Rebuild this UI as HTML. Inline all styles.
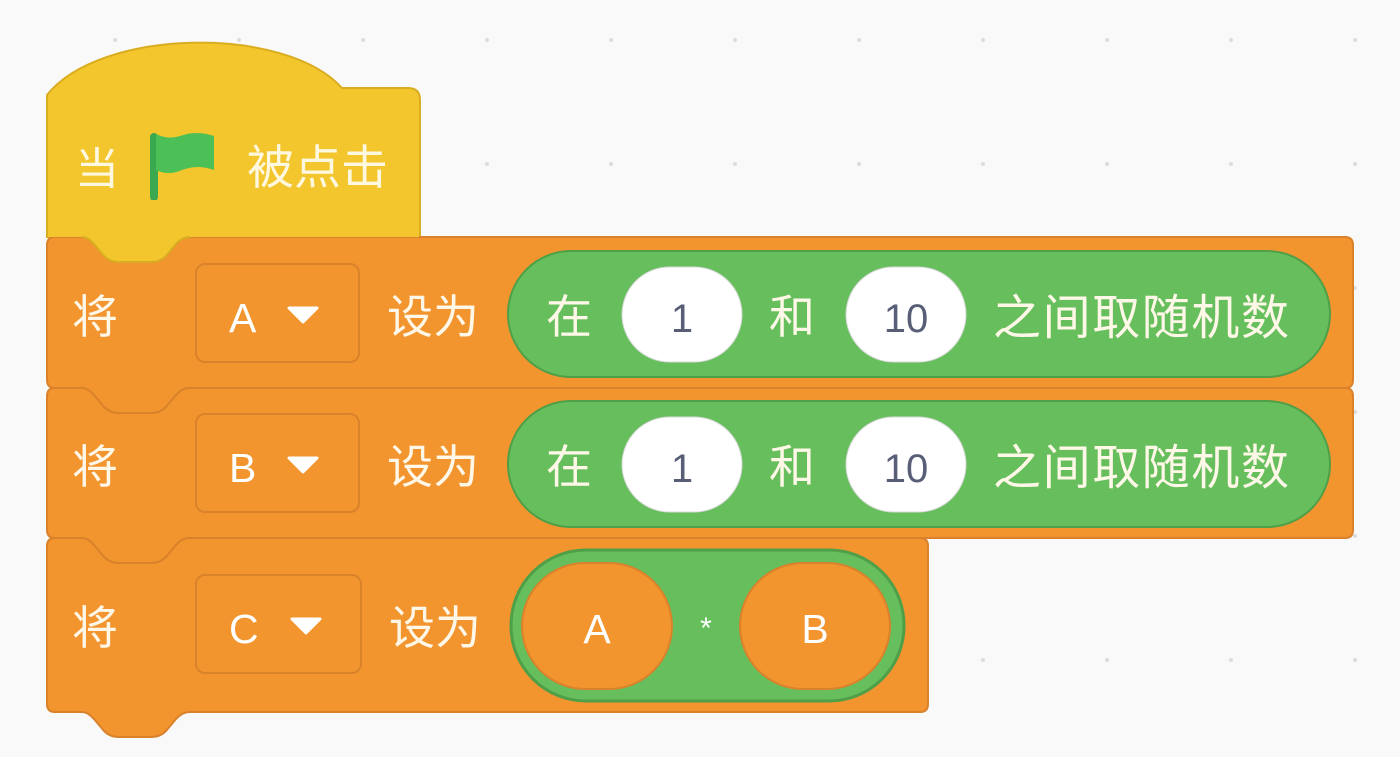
<!DOCTYPE html>
<html><head><meta charset="utf-8"><style>
html,body{margin:0;padding:0;background:#f9f9f9;}
svg{display:block}
text{font-family:"Liberation Sans","Noto Sans CJK SC",sans-serif;}
</style></head><body>
<svg width="1400" height="757" viewBox="0 0 1400 757" xmlns="http://www.w3.org/2000/svg">
<defs><pattern id="g" x="115" y="40" width="124" height="124" patternUnits="userSpaceOnUse"><circle cx="0" cy="0" r="2" fill="#dcdcdc"/><circle cx="124" cy="0" r="2" fill="#dcdcdc"/><circle cx="0" cy="124" r="2" fill="#dcdcdc"/><circle cx="124" cy="124" r="2" fill="#dcdcdc"/></pattern></defs>
<rect width="1400" height="757" fill="#f9f9f9"/>
<rect width="1400" height="757" fill="url(#g)"/>

<!-- hat -->
<path d="M47 95 C 100 28, 285 25, 342 88 L408 88 Q420 88 420 100 L420 237 L47 237 Z" fill="#f2c62c" stroke="#d9ad20" stroke-width="2"/>
<text x="75" y="184" font-size="44" fill="#fff8e0">当</text>
<path d="M154 137 L154 197" stroke="#3aa84e" stroke-width="8" stroke-linecap="round"/>
<path d="M156 134 Q168 140 180 136 Q196 130 214 136 L214 170 Q198 164 182 170 Q168 176 156 170 Z" fill="#4cbf56"/>
<text x="247" y="184" font-size="47" fill="#fff8e0">被点击</text>

<!-- blocks -->
<path d="M55 237 L82 237 Q88 237 94 244 L104 256 Q110 262 118 262 L152 262 Q160 262 166 256 L176 244 Q182 237 190 237 L1345 237 Q1353 237 1353 245 L1353 380 Q1353 388 1345 388 L190 388 Q182 388 176 395 L166 407 Q160 413 152 413 L118 413 Q110 413 104 407 L94 395 Q88 388 82 388 L55 388 Q47 388 47 380 L47 245 Q47 237 55 237 Z" fill="#f2952f" stroke="#d9822b" stroke-width="2"/>
<path d="M55 388 L82 388 Q88 388 94 395 L104 407 Q110 413 118 413 L152 413 Q160 413 166 407 L176 395 Q182 388 190 388 L1345 388 Q1353 388 1353 396 L1353 530 Q1353 538 1345 538 L190 538 Q182 538 176 545 L166 557 Q160 563 152 563 L118 563 Q110 563 104 557 L94 545 Q88 538 82 538 L55 538 Q47 538 47 530 L47 396 Q47 388 55 388 Z" fill="#f2952f" stroke="#d9822b" stroke-width="2"/>
<path d="M55 538 L82 538 Q88 538 94 545 L104 557 Q110 563 118 563 L152 563 Q160 563 166 557 L176 545 Q182 538 190 538 L920 538 Q928 538 928 546 L928 704 Q928 712 920 712 L190 712 Q182 712 176 719 L166 731 Q160 737 152 737 L118 737 Q110 737 104 731 L94 719 Q88 712 82 712 L55 712 Q47 712 47 704 L47 546 Q47 538 55 538 Z" fill="#f2952f" stroke="#d9822b" stroke-width="2"/>
<!-- hat bottom notch on top -->
<path d="M48 200 L48 237 L82 237 Q88 237 94 244 L104 256 Q110 262 118 262 L152 262 Q160 262 166 256 L176 244 Q182 237 190 237 L419 237 L419 200 Z" fill="#f2c62c"/>
<path d="M82 237 Q88 237 94 244 L104 256 Q110 262 118 262 L152 262 Q160 262 166 256 L176 244 Q182 237 190 237" fill="none" stroke="#d9ad20" stroke-width="2"/>

<!-- row 1 -->
<text x="72" y="333" font-size="46" fill="#fff8e8">将</text>
<rect x="196" y="264" width="163" height="98" rx="9" fill="#f2952f" stroke="#d9822b" stroke-width="2"/>
<text x="229" y="332" font-size="41" fill="#fff">A</text>
<path d="M289 308 L317 308 L303 322 Z" fill="#fff" stroke="#fff" stroke-width="3" stroke-linejoin="round"/>
<text x="387" y="333" font-size="46" fill="#fff8e8">设为</text>
<rect x="508" y="251" width="822" height="126" rx="63" fill="#66bf5c" stroke="#4f9f48" stroke-width="2"/>
<text x="546" y="333" font-size="46" fill="#fff8e8">在</text>
<rect x="622" y="267" width="120" height="95" rx="47.5" fill="#fff" stroke="#d8d8d8" stroke-width="1"/>
<text x="682" y="332" font-size="40" fill="#575e75" text-anchor="middle">1</text>
<text x="769" y="333" font-size="46" fill="#fff8e8">和</text>
<rect x="846" y="267" width="120" height="95" rx="47.5" fill="#fff" stroke="#d8d8d8" stroke-width="1"/>
<text x="906" y="332" font-size="40" fill="#575e75" text-anchor="middle">10</text>
<text x="993" y="334" font-size="48" fill="#fff8e8" textLength="296">之间取随机数</text>

<!-- row 2 -->
<text x="72" y="483" font-size="46" fill="#fff8e8">将</text>
<rect x="196" y="414" width="163" height="98" rx="9" fill="#f2952f" stroke="#d9822b" stroke-width="2"/>
<text x="229" y="482" font-size="41" fill="#fff">B</text>
<path d="M289 458 L317 458 L303 472 Z" fill="#fff" stroke="#fff" stroke-width="3" stroke-linejoin="round"/>
<text x="387" y="483" font-size="46" fill="#fff8e8">设为</text>
<rect x="508" y="401" width="822" height="126" rx="63" fill="#66bf5c" stroke="#4f9f48" stroke-width="2"/>
<text x="546" y="483" font-size="46" fill="#fff8e8">在</text>
<rect x="622" y="417" width="120" height="95" rx="47.5" fill="#fff" stroke="#d8d8d8" stroke-width="1"/>
<text x="682" y="482" font-size="40" fill="#575e75" text-anchor="middle">1</text>
<text x="769" y="483" font-size="46" fill="#fff8e8">和</text>
<rect x="846" y="417" width="120" height="95" rx="47.5" fill="#fff" stroke="#d8d8d8" stroke-width="1"/>
<text x="906" y="482" font-size="40" fill="#575e75" text-anchor="middle">10</text>
<text x="993" y="484" font-size="48" fill="#fff8e8" textLength="296">之间取随机数</text>

<!-- row 3 -->
<text x="72" y="644" font-size="46" fill="#fff8e8">将</text>
<rect x="196" y="575" width="165" height="98" rx="9" fill="#f2952f" stroke="#d9822b" stroke-width="2"/>
<text x="229" y="643" font-size="41" fill="#fff">C</text>
<path d="M292 619 L320 619 L306 633 Z" fill="#fff" stroke="#fff" stroke-width="3" stroke-linejoin="round"/>
<text x="389" y="644" font-size="46" fill="#fff8e8">设为</text>
<rect x="511" y="550" width="393" height="151" rx="75" fill="#66bf5c" stroke="#4f9f48" stroke-width="3"/>
<rect x="522" y="563" width="150" height="126" rx="63" fill="#f2952f" stroke="#d9822b" stroke-width="2"/>
<text x="597" y="643" font-size="41" fill="#fff" text-anchor="middle">A</text>
<text x="706" y="638" font-size="30" fill="#fff" text-anchor="middle">*</text>
<rect x="740" y="563" width="150" height="126" rx="63" fill="#f2952f" stroke="#d9822b" stroke-width="2"/>
<text x="815" y="643" font-size="41" fill="#fff" text-anchor="middle">B</text>
</svg>
</body></html>
